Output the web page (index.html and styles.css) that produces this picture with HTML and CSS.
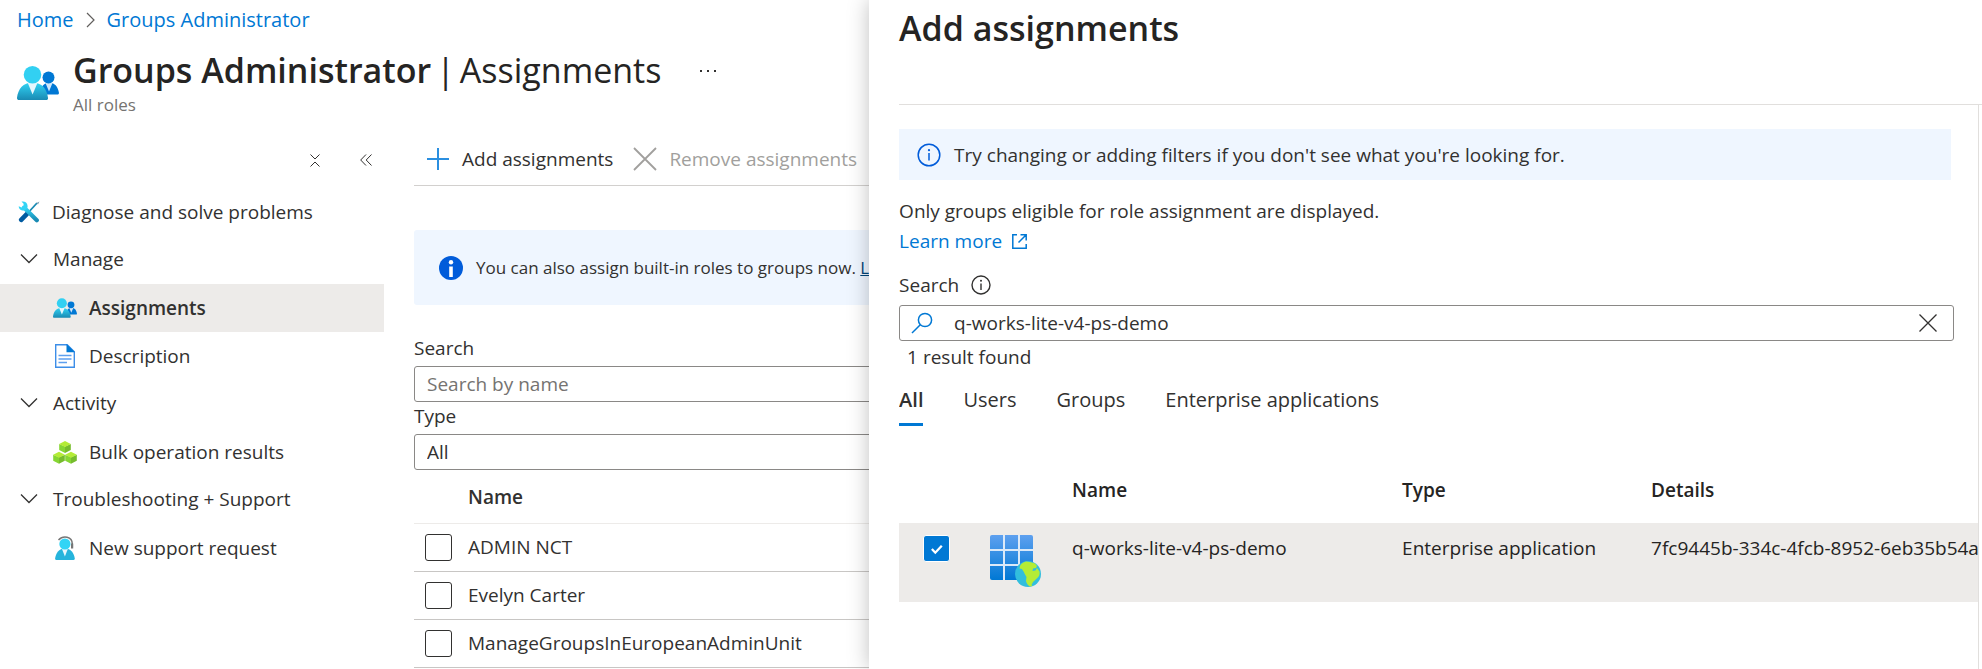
FILE: index.html
```html
<!DOCTYPE html>
<html lang="en">
<head>
  <meta charset="utf-8">
  <title>Groups Administrator | Assignments</title>
  <link rel="stylesheet" href="styles.css">
</head>
<body>

<!-- Shared icons -->
<svg class="defs" aria-hidden="true">
  <defs>
    <linearGradient id="cyan" x1="0" y1="0" x2="0" y2="1">
      <stop offset="0" stop-color="#32d4f5"/>
      <stop offset="1" stop-color="#198ab3"/>
    </linearGradient>
    <linearGradient id="blue" x1="0" y1="0" x2="0" y2="1">
      <stop offset="0" stop-color="#5ea0ef"/>
      <stop offset="1" stop-color="#0078d4"/>
    </linearGradient>
    <symbol id="people" viewBox="0 0 42 34">
      <path d="M22 28.500h18.200c1.200 0 1.900-.8 1.700-2-.9-5.500-3.900-9.800-9.400-9.800-5 0-8 3.300-9.500 8z" fill="#0078d4"/>
      <path d="M28.500 17l3.500 8.500 3.500-8.500z" fill="#cfe6fa"/>
      <circle cx="31.500" cy="11.500" r="6" fill="#0078d4"/>
      <path d="M2 34h27.200c1.300 0 2-.9 1.800-2.200C29.800 23 25 16.500 15.500 16.500S1.200 23 0 31.800C-.1 33.100.7 34 2 34z" fill="url(#cyan)"/>
      <path d="M10.800 17l4.800 11.500L20.400 17z" fill="#e6f7fd"/>
      <circle cx="15.500" cy="8.800" r="8.800" fill="#32d0f2"/>
    </symbol>
    <symbol id="chevron" viewBox="0 0 18 12">
      <path d="M1 1.500l8 8 8-8" fill="none" stroke="#323130" stroke-width="1.300"/>
    </symbol>
  </defs>
</svg>

<div class="page">
  <header class="page-header">
    <nav class="breadcrumb">
      <a href="#">Home</a>
      <svg width="9" height="16" viewBox="0 0 9 16"><path d="M1 1l7 7-7 7" fill="none" stroke="#605e5c" stroke-width="1.200"/></svg>
      <a href="#">Groups Administrator</a>
    </nav>
    <div class="heading">
      <svg class="heading-icon" width="42" height="34"><use href="#people"/></svg>
      <div>
        <h1>Groups Administrator <span>|</span> <span>Assignments</span></h1>
        <p>All roles</p>
      </div>
      <button class="more" aria-label="More">
        <svg width="18" height="4" viewBox="0 0 18 4" fill="#323130"><rect x="1" y="1" width="2" height="2"/><rect x="8" y="1" width="2" height="2"/><rect x="15" y="1" width="2" height="2"/></svg>
      </button>
    </div>
  </header>

  <div class="columns">
    <!-- Left menu -->
    <aside class="sidebar">
      <div class="sidebar-tools">
        <button aria-label="Collapse all">
          <svg width="10" height="13" viewBox="0 0 10 13" fill="none" stroke="#323130"><path d="M.5.500L5 5l4.500-4.500M.5 12.500L5 8l4.500 4.500"/></svg>
        </button>
        <button aria-label="Hide menu">
          <svg width="12" height="12" viewBox="0 0 12 12" fill="none" stroke="#323130"><path d="M6 .500L.700 6 6 11.500M11.500.500L6.200 6l5.300 5.500"/></svg>
        </button>
      </div>
      <ul class="menu">
        <li><a href="#">
          <svg class="icon" width="22" height="22" viewBox="0 0 22 22">
            <path d="M19 2L3.500 19" stroke="#198ab3" stroke-width="1.800"/>
            <path d="M21.500.500l-3 1.500 1.500 1.500z" fill="#7a9bb0"/>
            <path d="M9 12.800l-5.800 6" stroke="#005ba1" stroke-width="4.600" stroke-linecap="round"/>
            <path d="M6 6.500l12.800 12.700" stroke="url(#cyan)" stroke-width="4.200" stroke-linecap="round"/>
            <path d="M3.500.800C6 0 9.500 1.500 9.600 5c.1 3-2.600 4.900-5.200 4.500C2 9.200.700 7.300.700 5.200l3 1.400 2.200-1.900-.6-2.500z" fill="#32d4f5"/>
          </svg>
          Diagnose and solve problems</a></li>
        <li class="group"><button><svg class="icon" width="18" height="12"><use href="#chevron"/></svg>Manage</button></li>
        <li class="child active"><a href="#"><svg class="icon" width="24" height="20"><use href="#people"/></svg>Assignments</a></li>
        <li class="child"><a href="#">
          <svg class="icon" width="20" height="24" viewBox="0 0 20 24">
            <path d="M.700.700h11.500l7.100 7v15.600H.700z" fill="#fff" stroke="#3d8ee8" stroke-width="1.400"/>
            <path d="M11.500 0v8.300H20z" fill="#0078d4"/>
            <path d="M3.500 11.500h13M3.500 15h13M3.500 18.500h8.500" stroke="#5ea0ef" stroke-width="1.500"/>
          </svg>
          Description</a></li>
        <li class="group"><button><svg class="icon" width="18" height="12"><use href="#chevron"/></svg>Activity</button></li>
        <li class="child"><a href="#">
          <svg class="icon" width="24" height="23" viewBox="0 0 24 23">
            <g id="cube"><path d="M6.200 3l5.800 2.600V12L6.200 9z" fill="#86d633"/><path d="M17.800 3L12 5.600V12l5.800-3z" fill="#76bc2d"/><path d="M12 0l5.800 3L12 6 6.200 3z" fill="#b4ec36"/></g>
            <use href="#cube" x="-6" y="10.700"/>
            <use href="#cube" x="6" y="10.700"/>
          </svg>
          Bulk operation results</a></li>
        <li class="group"><button><svg class="icon" width="18" height="12"><use href="#chevron"/></svg>Troubleshooting + Support</button></li>
        <li class="child"><a href="#">
          <svg class="icon" width="20" height="24" viewBox="0 0 20 24">
            <path d="M3.500 4C8 -1 17.300.200 17.300 8v3.500" fill="none" stroke="#767676" stroke-width="1.500"/>
            <path d="M16 7.500h2.200v5H16z" fill="#767676"/>
            <path d="M1.200 24h17.400c.8 0 1.300-.6 1.200-1.400C19 17 16 12.500 9.900 12.500S.900 17 .1 22.600C0 23.400.400 24 1.200 24z" fill="#25b4dc"/>
            <path d="M7 13l2.900 7.500L12.800 13z" fill="#e6f7fd"/>
            <circle cx="9.900" cy="8" r="5.600" fill="#32d4f5"/>
          </svg>
          New support request</a></li>
      </ul>
    </aside>

    <!-- Existing assignments -->
    <main class="content">
      <div class="toolbar">
        <button>
          <svg width="24" height="24" viewBox="0 0 24 24"><path d="M12 1v22M1 12h22" stroke="#2b8fe0" stroke-width="2"/></svg>
          Add assignments
        </button>
        <button disabled>
          <svg width="24" height="24" viewBox="0 0 24 24"><path d="M1 1l22 22M23 1L1 23" stroke="#a19f9d" stroke-width="1.800"/></svg>
          Remove assignments
        </button>
      </div>

      <div class="notice">
        <svg width="24" height="24" viewBox="0 0 24 24"><circle cx="12" cy="12" r="12" fill="#015cda"/><circle cx="12" cy="6.200" r="2.200" fill="#fff"/><path d="M10.200 10.500h3.600V21h-3.600z" fill="#fff"/></svg>
        <span>You can also assign built-in roles to groups now. <a href="#">Learn more</a></span>
      </div>

      <label for="nameSearch">Search</label>
      <input class="field" type="text" id="nameSearch" placeholder="Search by name">
      <label for="typeFilter">Type</label>
      <select class="field" id="typeFilter"><option>All</option></select>

      <table class="members">
        <thead>
          <tr><th class="check"></th><th>Name</th></tr>
        </thead>
        <tbody>
          <tr><td class="check"><input type="checkbox" aria-label="ADMIN NCT"></td><td>ADMIN NCT</td></tr>
          <tr><td class="check"><input type="checkbox" aria-label="Evelyn Carter"></td><td>Evelyn Carter</td></tr>
          <tr><td class="check"><input type="checkbox" aria-label="ManageGroupsInEuropeanAdminUnit"></td><td>ManageGroupsInEuropeanAdminUnit</td></tr>
        </tbody>
      </table>
    </main>
  </div>

  <!-- Add assignments panel -->
  <section class="panel">
    <h2>Add assignments</h2>
    <div class="panel-body">
      <div class="tip">
        <svg width="24" height="24" viewBox="0 0 24 24"><circle cx="12" cy="12" r="10.800" fill="none" stroke="#015cda" stroke-width="1.500"/><path d="M12 10v7.500" stroke="#015cda" stroke-width="1.500"/><circle cx="12" cy="7.200" r="1.100" fill="#015cda"/></svg>
        Try changing or adding filters if you don't see what you're looking for.
      </div>
      <p class="hint">Only groups eligible for role assignment are displayed.</p>
      <a class="learn" href="#">Learn more
        <svg width="15" height="15" viewBox="0 0 15 15" fill="none" stroke="#0078d4" stroke-width="1.500"><path d="M5 .800H.800v13.400h13.400V10M8.500.800h5.700v5.700M14 1L6.500 8.500"/></svg>
      </a>
      <div class="search-label">
        <label for="memberSearch">Search</label>
        <svg width="20" height="20" viewBox="0 0 20 20"><circle cx="10" cy="10" r="9" fill="none" stroke="#323130" stroke-width="1.400"/><path d="M10 8.500V15" stroke="#323130" stroke-width="1.400"/><circle cx="10" cy="5.800" r="1" fill="#323130"/></svg>
      </div>
      <div class="search-box">
        <svg width="22" height="22" viewBox="0 0 22 22" fill="none" stroke="#0078d4" stroke-width="1.500"><circle cx="14" cy="8" r="6.600"/><path d="M9.300 12.700L1 21"/></svg>
        <input type="text" id="memberSearch" value="q-works-lite-v4-ps-demo">
        <button aria-label="Clear search">
          <svg width="18" height="18" viewBox="0 0 18 18"><path d="M.500.500l17 17M17.500.500l-17 17" stroke="#323130" stroke-width="1.300"/></svg>
        </button>
      </div>
      <p class="result-count">1 result found</p>

      <div class="tabs" role="tablist">
        <button class="selected" role="tab">All</button>
        <button role="tab">Users</button>
        <button role="tab">Groups</button>
        <button role="tab">Enterprise applications</button>
      </div>

      <table class="results">
        <thead>
          <tr><th class="check"></th><th class="pic"></th><th class="name">Name</th><th class="type">Type</th><th>Details</th></tr>
        </thead>
        <tbody>
          <tr>
            <td class="check"><input type="checkbox" aria-label="q-works-lite-v4-ps-demo" checked></td>
            <td>
              <svg width="52" height="52" viewBox="0 0 52 52">
                <rect width="43" height="45" rx="2" fill="url(#blue)"/>
                <path d="M14 0v45M29 0v45M0 15h43M0 30h43" stroke="#dbe9f8" stroke-width="2"/>
                <circle cx="38" cy="39" r="13" fill="#32bedd"/>
                <path d="M30 31c1-2 3-4 6-4.500l4 .500 5 1.500 2 2.500-1 2-3 .500-.500 2.500 3-.500 1.500-2.500 2.500 3.500c.500 4-.800 5.500-3.300 7.500l-3.200 3-1.500 3 1 1-2.500.500c-2-1-3.500-3-4-5.500l.500-4-2-3.500c-.500-2-2-3-2.500-4.500l-2.500-.500z" fill="#b4ec36"/>
              </svg>
            </td>
            <td>q-works-lite-v4-ps-demo</td>
            <td>Enterprise application</td>
            <td>7fc9445b-334c-4fcb-8952-6eb35b54ab1d</td>
          </tr>
        </tbody>
      </table>
    </div>
  </section>
</div>

</body>
</html>
```
FILE: styles.css
```css
* {
  box-sizing: border-box;
}
body {
  margin: 0;
  font-family: 'Open Sans', 'Noto Sans', sans-serif;
  font-size: 19px;
  line-height: 26px;
  color: #323130;
  background: #fff;
}
input, select, button {
  font: inherit;
  color: inherit;
}
button {
  padding: 0;
  border: none;
  background: none;
  cursor: pointer;
}
svg {
  display: block;
  flex: none;
}
a {
  color: #0078d4;
  text-decoration: none;
}
h1, h2, p, ul {
  margin: 0;
  padding: 0;
}
table {
  width: 100%;
  border-collapse: collapse;
  table-layout: fixed;
}
th, td {
  padding: 0;
  text-align: left;
}
th {
  font-weight: 600;
}
.defs {
  position: absolute;
  width: 0;
  height: 0;
}
.page {
  position: relative;
  min-height: 100vh;
  overflow: hidden;
}

/* Header */
.page-header {
  padding: 7px 17px 0;
}
.breadcrumb {
  display: flex;
  align-items: center;
  gap: 12px;
  font-size: 20px;
}
.heading {
  display: flex;
  align-items: flex-start;
  gap: 14px;
  margin-top: 14px;
}
.heading-icon {
  margin-top: 19px;
}
h1, h2 {
  font-size: 34px;
  line-height: 46px;
  font-weight: 600;
  color: #252423;
}
h1 {
  display: flex;
  gap: 5px;
}
h1 span {
  font-weight: 400;
}
.heading p {
  font-size: 17px;
  line-height: 24px;
  color: #757371;
}
.more {
  margin: 22px 0 0 24px;
}

/* Left menu */
.columns {
  display: grid;
  grid-template-columns: 384px 1fr;
  column-gap: 30px;
  margin-top: 15px;
}
.sidebar-tools {
  display: flex;
  justify-content: flex-end;
  align-items: center;
  gap: 40px;
  height: 56px;
  padding-right: 12px;
}
.menu {
  list-style: none;
}
.menu a, .menu button {
  display: flex;
  align-items: center;
  gap: 12px;
  width: 100%;
  height: 48px;
  padding-left: 18px;
  color: inherit;
}
.menu .group button {
  padding: 0 0 2px 20px;
  gap: 15px;
}
.menu .child a {
  padding-left: 53px;
}
.menu .child .icon {
  width: 24px;
}
.menu .active {
  background: #edebe9;
  font-weight: 600;
}

/* Main content */
.toolbar {
  display: flex;
  align-items: center;
  gap: 20px;
  height: 54px;
  padding-left: 12px;
  border-bottom: 1px solid #d2d0ce;
}
.toolbar button {
  display: flex;
  align-items: center;
  gap: 12px;
}
.toolbar button:disabled {
  color: #a19f9d;
}
.notice {
  display: flex;
  align-items: center;
  gap: 13px;
  height: 75px;
  margin: 44px 0 30px;
  padding-left: 25px;
  border-radius: 3px;
  background: #eff6ff;
  font-size: 17px;
}
.notice a {
  color: #004578;
  text-decoration: underline;
}
.content label {
  display: block;
}
.field {
  display: block;
  width: 100%;
  height: 36px;
  margin: 5px 0 1px;
  padding: 0 12px;
  border: 1px solid #8a8886;
  border-radius: 3px;
  background: #fff;
  appearance: none;
}
.field::placeholder {
  color: #757371;
}
.members th {
  height: 52px;
  border-bottom: 1px solid #edebe9;
}
.members td {
  height: 48px;
  border-bottom: 1px solid #c8c6c4;
}
.members .check {
  width: 54px;
  padding-left: 11px;
}
input[type="checkbox"] {
  display: block;
  width: 27px;
  height: 27px;
  margin: 0;
  border: 1px solid #323130;
  border-radius: 3px;
  background: #fff;
  appearance: none;
}
input[type="checkbox"]:checked {
  border-color: #fff;
  background: #0078d4;
}

/* Panel */
.panel {
  position: absolute;
  top: 0;
  right: 0;
  bottom: 0;
  width: 56.15%;
  padding-left: 30px;
  background: #fff;
  box-shadow: 0 0 20px rgba(0,0,0,0.25);
}
.panel h2 {
  padding: 5px 0 53px;
  border-bottom: 1px solid #e1dfdd;
}
.panel-body {
  height: calc(100% - 105px);
  margin-right: 3px;
  padding-top: 24px;
  border-right: 1px solid #e1dfdd;
  overflow: hidden;
}
.tip {
  display: flex;
  align-items: center;
  gap: 13px;
  height: 51px;
  margin-right: 27px;
  padding-left: 18px;
  background: #eff6ff;
}
.hint {
  margin-top: 18px;
}
.learn {
  display: flex;
  align-items: center;
  gap: 10px;
  margin-top: 4px;
}
.search-label {
  display: flex;
  align-items: center;
  gap: 12px;
  margin: 18px 0 7px;
}
.search-box {
  display: flex;
  align-items: center;
  height: 36px;
  margin-right: 24px;
  padding: 0 16px 0 11px;
  border: 1px solid #8a8886;
  border-radius: 3px;
}
.search-box input {
  flex: 1;
  height: 32px;
  padding: 0 0 0 21px;
  border: none;
  outline: none;
}
.result-count {
  margin: 3px 0 0 8px;
}
.tabs {
  display: flex;
  gap: 40px;
  margin-top: 14px;
  font-size: 20px;
}
.tabs button {
  height: 42px;
  padding-bottom: 8px;
  border-bottom: 3px solid transparent;
}
.tabs .selected {
  border-color: #0078d4;
  font-weight: 600;
}
.results {
  margin-top: 31px;
  color: #252423;
}
.results th {
  height: 66px;
}
.results td {
  height: 79px;
  padding-top: 12px;
  vertical-align: top;
  white-space: nowrap;
}
.results tbody tr {
  background: #edebe9;
}
.results .check {
  width: 91px;
  padding-left: 24px;
}
.results .pic {
  width: 82px;
}
.results .name {
  width: 330px;
}
.results .type {
  width: 249px;
}
.results input:checked {
  background: #0078d4 url("data:image/svg+xml,%3Csvg xmlns='http://www.w3.org/2000/svg' viewBox='0 0 27 27'%3E%3Cpath d='M8.500 14l3.700 4 7-7.500' fill='none' stroke='%23fff' stroke-width='2.500'/%3E%3C/svg%3E") center no-repeat;
}
```
